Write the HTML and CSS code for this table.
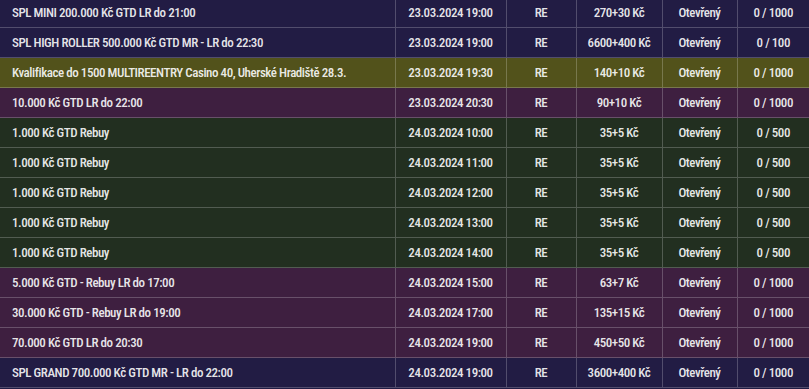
FILE: index.html
```html
<!DOCTYPE html>
<html lang="cs">
<head>
<meta charset="utf-8">
<link rel="stylesheet" href="styles.css">
</head>
<body>
<div class="wrap">
<table class="events">
<colgroup>
<col class="c-name"><col class="c-date"><col class="c-type"><col class="c-price"><col class="c-status"><col class="c-count">
</colgroup>
<tbody>
<tr class="navy"><td class="name">SPL MINI 200.000 Kč GTD LR do 21:00</td><td>23.03.2024 19:00</td><td>RE</td><td>270+30 Kč</td><td>Otevřený</td><td>0 / 1000</td></tr>
<tr class="navy"><td class="name">SPL HIGH ROLLER 500.000 Kč GTD MR - LR do 22:30</td><td>23.03.2024 19:00</td><td>RE</td><td>6600+400 Kč</td><td>Otevřený</td><td>0 / 100</td></tr>
<tr class="olive"><td class="name">Kvalifikace do 1500 MULTIREENTRY Casino 40, Uherské Hradiště 28.3.</td><td>23.03.2024 19:30</td><td>RE</td><td>140+10 Kč</td><td>Otevřený</td><td>0 / 1000</td></tr>
<tr class="plum"><td class="name">10.000 Kč GTD LR do 22:00</td><td>23.03.2024 20:30</td><td>RE</td><td>90+10 Kč</td><td>Otevřený</td><td>0 / 1000</td></tr>
<tr class="green"><td class="name">1.000 Kč GTD Rebuy</td><td>24.03.2024 10:00</td><td>RE</td><td>35+5 Kč</td><td>Otevřený</td><td>0 / 500</td></tr>
<tr class="green"><td class="name">1.000 Kč GTD Rebuy</td><td>24.03.2024 11:00</td><td>RE</td><td>35+5 Kč</td><td>Otevřený</td><td>0 / 500</td></tr>
<tr class="green"><td class="name">1.000 Kč GTD Rebuy</td><td>24.03.2024 12:00</td><td>RE</td><td>35+5 Kč</td><td>Otevřený</td><td>0 / 500</td></tr>
<tr class="green"><td class="name">1.000 Kč GTD Rebuy</td><td>24.03.2024 13:00</td><td>RE</td><td>35+5 Kč</td><td>Otevřený</td><td>0 / 500</td></tr>
<tr class="green"><td class="name">1.000 Kč GTD Rebuy</td><td>24.03.2024 14:00</td><td>RE</td><td>35+5 Kč</td><td>Otevřený</td><td>0 / 500</td></tr>
<tr class="plum"><td class="name">5.000 Kč GTD - Rebuy LR do 17:00</td><td>24.03.2024 15:00</td><td>RE</td><td>63+7 Kč</td><td>Otevřený</td><td>0 / 1000</td></tr>
<tr class="plum"><td class="name">30.000 Kč GTD - Rebuy LR do 19:00</td><td>24.03.2024 17:00</td><td>RE</td><td>135+15 Kč</td><td>Otevřený</td><td>0 / 1000</td></tr>
<tr class="plum"><td class="name">70.000 Kč GTD LR do 20:30</td><td>24.03.2024 19:00</td><td>RE</td><td>450+50 Kč</td><td>Otevřený</td><td>0 / 1000</td></tr>
<tr class="navy"><td class="name">SPL GRAND 700.000 Kč GTD MR - LR do 22:00</td><td>24.03.2024 19:00</td><td>RE</td><td>3600+400 Kč</td><td>Otevřený</td><td>0 / 1000</td></tr>
</tbody>
</table>
</div>
</body>
</html>
```

FILE: styles.css
```css
html, body {
  margin: 0;
  padding: 0;
  background: #221c44;
}
.wrap {
  margin-top: -2px;
  overflow: hidden;
}
.events {
  width: 809px;
  border-collapse: collapse;
  table-layout: fixed;
  font-family: "Roboto Condensed", "Liberation Sans Narrow", "Roboto", sans-serif;
  font-stretch: condensed;
  font-weight: 500;
  font-size: 13px;
  letter-spacing: -0.45px;
  color: rgba(255, 255, 255, 0.9);
}
.c-name { width: 395px; }
.c-date { width: 111px; }
.c-type { width: 70px; }
.c-price { width: 86px; }
.c-status { width: 75px; }
.c-count { width: 72px; }
.events td {
  height: 29px;
  padding: 0 4px;
  text-align: center;
  white-space: nowrap;
  border-top: 1px solid rgba(255, 255, 255, 0.22);
  border-bottom: 1px solid rgba(255, 255, 255, 0.22);
  border-left: 1px solid rgba(255, 255, 255, 0.22);
  vertical-align: middle;
}
.events tr:first-child td { border-top: none; }
.events td:first-child { border-left: none; }
.events td.name {
  text-align: left;
  padding-left: 12px;
}
.navy { background: #221c44; }
.olive { background: #52521b; }
.plum { background: #3e1f40; }
.green { background: #222f20; }
```
